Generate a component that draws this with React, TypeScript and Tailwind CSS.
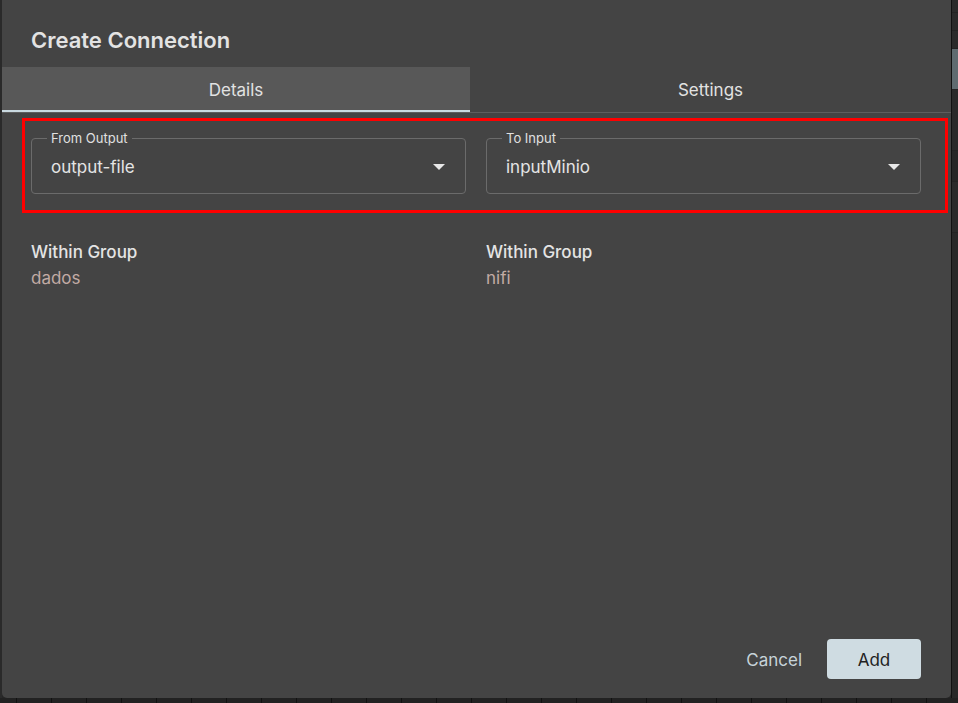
type Field = { label: string; value: string; group: string };

const FIELDS: Field[] = [
  { label: 'From Output', value: 'output-file', group: 'dados' },
  { label: 'To Input', value: 'inputMinio', group: 'nifi' },
];

function Caret() {
  return (
    <svg width="12" height="6" viewBox="0 0 12 6" className="shrink-0 mt-[2px]">
      <path d="M0 0h12L6 6z" fill="#e8e8e8" />
    </svg>
  );
}

function SelectField({ f }: { f: Field }) {
  return (
    <div className="relative flex-1 h-[56px] rounded-[4px] border border-[#6b6b6b] flex items-center pl-[19px] pr-[20px]">
      <span className="absolute -top-[9px] left-[15px] px-[4px] bg-[#444444] text-[13px] leading-[16px] text-[#e0e0e0]">
        {f.label}
      </span>
      <span className="flex-1 pt-[3px] text-[17px] text-[#e4e4e4]">{f.value}</span>
      <Caret />
    </div>
  );
}

export default function App() {
  return (
    <div
      className="w-[958px] h-[703px] bg-[#262626] flex flex-col overflow-hidden"
      style={{ fontFamily: 'Inter, "Noto Sans", sans-serif' }}
    >
      <div className="flex flex-1 min-h-0">
        <div className="w-[2px] bg-[#2a2a2a]" />
        <div className="w-[949px] h-[698px] bg-[#444444] rounded-b-[5px] flex flex-col">
          {/* ── Title ── */}
          <div className="pt-[26px] pl-[29px] h-[67px]">
            <h1 className="text-[22px] leading-[28px] font-semibold text-[#e3e3e3]">
              Create Connection
            </h1>
          </div>

          {/* ── Tabs ── */}
          <div className="flex border-b border-[#5e5e5e]">
            <div className="w-[468px] h-[45px] pt-[5px] bg-[#585858] border-b-2 border-[#c9d9e0] flex items-center justify-center text-[17px] text-[#e2e2e2]">
              Details
            </div>
            <div className="flex-1 h-[45px] pt-[3px] flex items-center justify-center text-[17px] text-[#e2e2e2]">
              Settings
            </div>
          </div>

          {/* ── Source / destination ── */}
          <div className="mt-[5px] ml-[20px] mr-[3px] border-[3px] border-[#ff0000] pt-[17px] pb-[16px] pl-[6px] pr-[24px] flex gap-[20px]">
            {FIELDS.map((f) => (
              <SelectField key={f.label} f={f} />
            ))}
          </div>

          <div className="mt-[27px] pl-[29px] pr-[30px] flex gap-[20px]">
            {FIELDS.map((f) => (
              <div key={f.label} className="flex-1">
                <div className="text-[17px] leading-[24px] font-medium text-[#e4e4e4]">Within Group</div>
                <div className="text-[17px] leading-[28px] text-[#c2aba4]">{f.group}</div>
              </div>
            ))}
          </div>

          {/* ── Actions ── */}
          <div className="mt-auto pb-[19px] pr-[30px] flex justify-end items-center gap-[10px]">
            <button className="h-[40px] px-[15px] pt-[3px] rounded-[4px] text-[17px] text-[#c7d3d9]">Cancel</button>
            <button className="w-[94px] h-[40px] pt-[3px] rounded-[4px] bg-[#cfdce2] text-[17px] text-[#222222]">Add</button>
          </div>
        </div>
        <div className="flex-1 bg-[#232323] flex flex-col gap-[1px] border-l border-[#111]">
          <div className="h-[12px] bg-[#2a2a2a]" />
          <div className="h-[17px] bg-[#2a2a2a]" />
          <div className="h-[17px] bg-[#2a2a2a]" />
          <div className="h-[40px] bg-[#5f6b70]" />
          <div className="h-[60px] bg-[#2a2a2a]" />
          <div className="h-[30px] bg-[#262626]" />
          <div className="h-[50px] bg-[#2a2a2a]" />
          <div className="flex-1 bg-[#282828]" />
        </div>
      </div>
      <div className="h-[5px] bg-[#222222] flex gap-[34px] pl-[16px]">
        {Array.from({ length: 27 }).map((_, i) => (
          <div key={i} className="w-[1px] h-full bg-[#111111]" />
        ))}
      </div>
    </div>
  );
}
